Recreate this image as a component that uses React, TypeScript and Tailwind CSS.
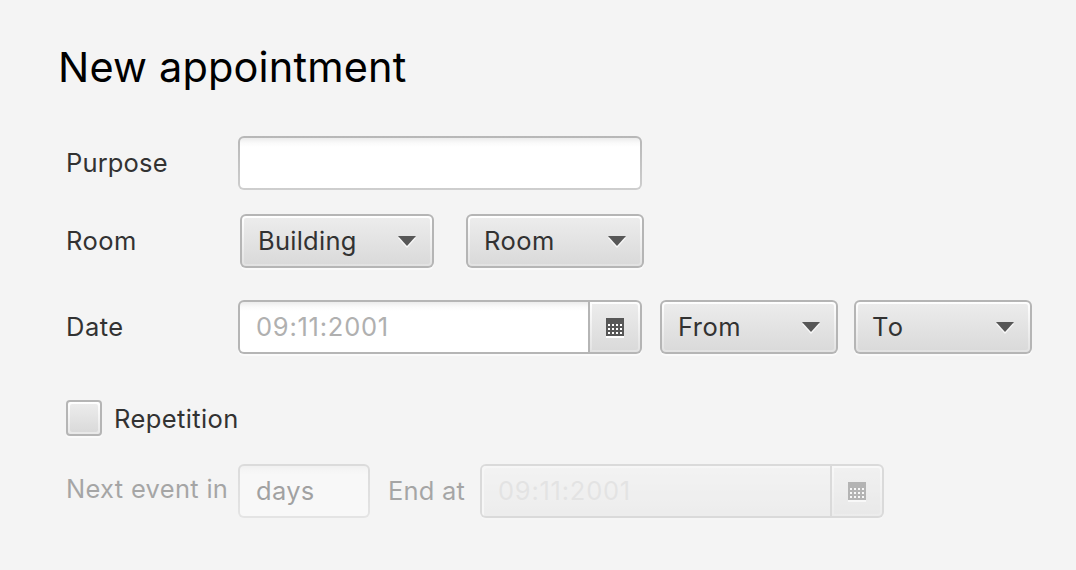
import type { ReactNode } from "react";

function Arrow() {
  return (
    <svg width="18" height="12" viewBox="0 0 18 12" className="block">
      <path d="M0 2h18L9 12z" fill="#f8f8f8" />
      <path d="M0 0h18L9 10z" fill="#575757" />
    </svg>
  );
}

function CalendarIcon() {
  const columns = [2, 6, 10, 14];
  const rows = [6, 10, 14];
  return (
    <svg width="18" height="20" viewBox="0 0 18 20" shapeRendering="crispEdges" className="block">
      <rect y="2" width="18" height="18" fill="#ffffff" />
      <rect width="18" height="18" fill="#575757" />
      {rows.map((y) =>
        columns.map((x) => <rect key={`${x}-${y}`} x={x} y={y} width="2" height="2" fill="#ffffff" />),
      )}
    </svg>
  );
}

function Select({ label, className }: { label: ReactNode; className: string }) {
  return (
    <button
      type="button"
      className={`flex h-[54px] shrink-0 rounded-[6px] bg-[#b5b5b5] p-[2px] text-left shadow-[0_2px_0_#fafafa] ${className}`}
    >
      <span className="flex h-[50px] w-full rounded-[4px] bg-linear-to-b from-white to-[#e2e2e2] p-[2px]">
        <span className="flex h-[46px] w-full items-center justify-between rounded-[2px] bg-linear-to-b from-[#ececec] to-[#dadada] pr-[14px] pl-[14px]">
          {label}
          <span className="pt-[2px]">
            <Arrow />
          </span>
        </span>
      </span>
    </button>
  );
}

function TextField({ children, className }: { children?: ReactNode; className: string }) {
  return (
    <div className={`h-[54px] shrink-0 rounded-[6px] bg-linear-to-b from-[#b7b7b7] to-[#cecece] p-[2px] ${className}`}>
      <div className="flex h-[50px] items-center rounded-[4px] bg-[linear-gradient(to_bottom,#ececec_0px,#fafafa_5px,#ffffff_9px)] px-4">
        {children}
      </div>
    </div>
  );
}

function DatePicker({ fieldClass, text, className }: { fieldClass: string; text: ReactNode; className: string }) {
  return (
    <div
      className={`flex h-[54px] w-[404px] shrink-0 gap-[2px] rounded-[6px] bg-[#b5b5b5] p-[2px] shadow-[0_2px_0_#fafafa] ${className}`}
    >
      <div className={`flex h-[50px] w-[348px] items-center rounded-l-[4px] pl-4 ${fieldClass}`}>{text}</div>
      <div className="h-[50px] w-[50px] rounded-r-[4px] bg-linear-to-b from-white to-[#e2e2e2] p-[2px]">
        <div className="flex h-full w-full items-center justify-center rounded-r-[2px] bg-linear-to-b from-[#ececec] to-[#dadada] pt-[2px]">
          <CalendarIcon />
        </div>
      </div>
    </div>
  );
}

export default function App() {
  return (
    <main className="h-[570px] w-[1076px] overflow-hidden bg-[#f4f4f4] pl-[66px] font-['Inter','Liberation_Sans',sans-serif] text-[25.5px] leading-[32px] whitespace-nowrap text-[#323232]">
      <h1 className="-ml-2 pt-[41px] text-[41.5px] leading-[52px] tracking-[0.15px] text-black">New appointment</h1>

      <div className="mt-[43px] flex h-[54px] items-center">
        <label className="w-[172px] tracking-[0.15px]">Purpose</label>
        <TextField className="w-[404px]" />
      </div>

      <div className="mt-6 flex h-[54px] items-center">
        <label className="w-[174px] tracking-[0.5px]">Room</label>
        <Select className="w-[194px]" label={<span className="tracking-[0.25px]">Building</span>} />
        <Select className="ml-8 w-[178px]" label={<span className="tracking-[0.5px]">Room</span>} />
      </div>

      <div className="mt-8 flex h-[54px] items-center">
        <label className="w-[172px] tracking-[0.5px]">Date</label>
        <DatePicker
          className=""
          fieldClass="bg-[linear-gradient(to_bottom,#ececec_0px,#fafafa_5px,#ffffff_9px)]"
          text={<span className="tracking-[0.75px] text-[#b0b0b0]">09:11:2001</span>}
        />
        <Select className="ml-[18px] w-[178px]" label={<span className="tracking-[0.5px]">From</span>} />
        <Select className="ml-4 w-[178px]" label={<span className="tracking-[1.2px]">To</span>} />
      </div>

      <div className="mt-[46px] flex h-9 items-center gap-3">
        <div className="size-9 rounded-[4px] bg-[#b5b5b5] p-[2px] shadow-[0_2px_0_#fafafa]">
          <div className="size-8 rounded-[2px] bg-linear-to-b from-white to-[#e8e8e8] p-[2px]">
            <div className="size-7 rounded-[2px] bg-linear-to-b from-[#ececec] to-[#dadada]" />
          </div>
        </div>
        <label className="pt-[2px] tracking-[0.4px]">Repetition</label>
      </div>

      <div className="mt-7 flex h-[54px] items-center">
        <label className="w-[172px] pb-1 tracking-[0.3px] opacity-40">Next event in</label>
        <TextField className="w-[132px] opacity-40">
          <span className="tracking-[0.3px] text-[#262626]">days</span>
        </TextField>
        <label className="ml-[18px] w-[92px] tracking-[0.2px] opacity-40">End at</label>
        <DatePicker
          className="opacity-40"
          fieldClass="bg-linear-to-b from-[#f2f2f2] to-[#e3e3e3] shadow-[inset_2px_2px_0_#f9f9f9]"
          text={<span className="tracking-[0.75px] text-[#cccccc]">09:11:2001</span>}
        />
      </div>
    </main>
  );
}
